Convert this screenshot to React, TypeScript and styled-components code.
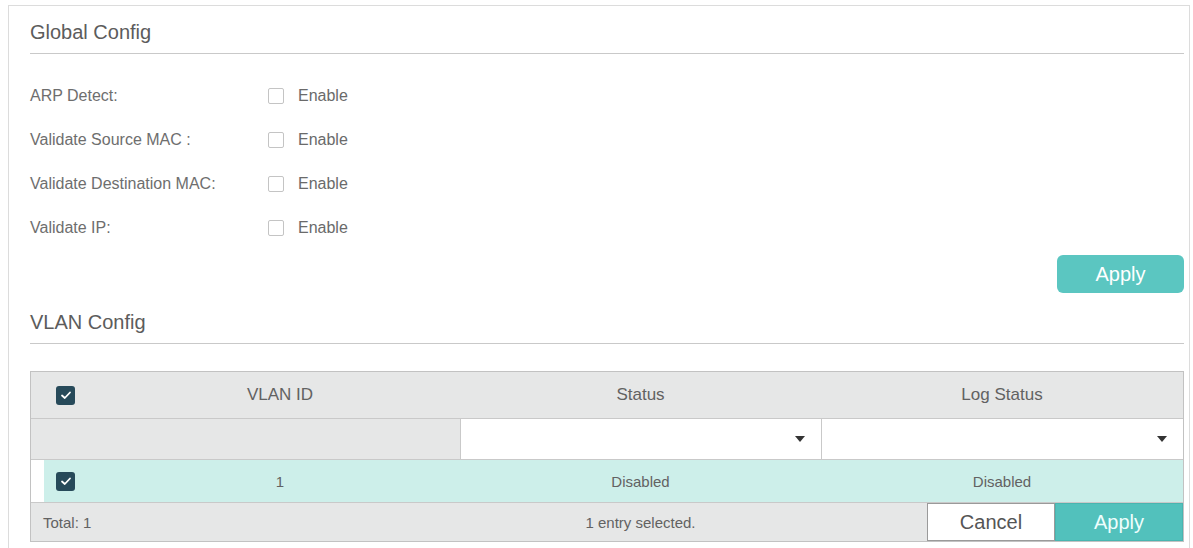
import React from 'react';
import styled, { createGlobalStyle } from 'styled-components';

const GlobalStyle = createGlobalStyle`
  body {
    margin: 0;
    background: #ffffff;
    font-family: "Liberation Sans", Arial, sans-serif;
  }
`;

const teal = '#5bc6c1';

const Panel = styled.div`
  margin: 5px 3px 0 8px;
  border: 1px solid #dcdcdc;
  border-bottom: none;
  padding: 0 5px 0 21px;
  min-height: 560px;
  box-sizing: border-box;
`;

const SectionTitle = styled.div<{ $gap?: number }>`
  margin-top: ${(p) => p.$gap || 0}px;
  padding: 14px 0 9px;
  font-size: 20px;
  line-height: 24px;
  color: #5c5c5c;
  border-bottom: 1px solid #c9c9c9;
`;

const FormList = styled.div`
  margin-top: 20px;
`;

const FormRow = styled.div`
  display: flex;
  align-items: center;
  height: 44px;
`;

const Label = styled.div`
  width: 238px;
  font-size: 16px;
  color: #6e6e6e;
`;

const CheckLabel = styled.label`
  display: flex;
  align-items: center;
  gap: 14px;
  font-size: 16px;
  color: #6a6a6a;
`;

const EmptyBox = styled.span`
  width: 14px;
  height: 14px;
  border: 1px solid #c4c4c4;
  border-radius: 2px;
  background: #ffffff;
`;

const ActionBar = styled.div`
  display: flex;
  justify-content: flex-end;
  margin-top: 5px;
`;

const ApplyButton = styled.button`
  width: 127px;
  height: 38px;
  border: none;
  border-radius: 6px;
  background: ${teal};
  color: #ffffff;
  font-family: inherit;
  font-size: 20px;
  padding: 0;
`;

const Table = styled.div`
  margin-top: 27px;
  border: 1px solid #c2c2c2;
`;

const GridRow = styled.div<{ $h: number; $bg: string; $line?: boolean }>`
  display: grid;
  grid-template-columns: 69px 360px 361px 1fr;
  height: ${(p) => p.$h}px;
  background: ${(p) => p.$bg};
  border-bottom: ${(p) => (p.$line ? '1px solid #c9c9c9' : 'none')};
`;

const Cell = styled.div<{ $size?: number; $span?: number; $align?: string; $pad?: number }>`
  display: flex;
  align-items: center;
  justify-content: ${(p) => p.$align || 'center'};
  grid-column: span ${(p) => p.$span || 1};
  padding-left: ${(p) => p.$pad || 0}px;
  font-size: ${(p) => p.$size || 15}px;
  color: #626262;
`;

const SelectBox = styled.div`
  display: flex;
  align-items: center;
  justify-content: flex-end;
  padding-right: 16px;
  background: #ffffff;
  border-left: 1px solid #c9c9c9;
`;

const Caret = styled.span`
  width: 0;
  height: 0;
  border-left: 5px solid transparent;
  border-right: 5px solid transparent;
  border-top: 6px solid #333333;
`;

const CheckedBox = styled.span`
  display: flex;
  align-items: center;
  justify-content: center;
  width: 19px;
  height: 19px;
  border-radius: 3px;
  background: #274a5a;
`;

const FooterButtons = styled.div`
  display: flex;
  justify-content: flex-end;
`;

const FooterButton = styled.button<{ $primary?: boolean }>`
  width: 128px;
  height: 100%;
  padding: 0;
  font-family: inherit;
  font-size: 20px;
  border: 1px solid ${(p) => (p.$primary ? '#49b5b0' : '#9a9a9a')};
  background: ${(p) => (p.$primary ? '#52c1bc' : '#ffffff')};
  color: ${(p) => (p.$primary ? '#eefefd' : '#555555')};
`;

const Check = () => (
  <CheckedBox>
    <svg width="12" height="10" viewBox="0 0 12 10">
      <polyline points="2,5.5 4.8,8 10,2.5" fill="none" stroke="#ffffff" strokeWidth="1.8" strokeLinecap="round" strokeLinejoin="round" />
    </svg>
  </CheckedBox>
);

const options = ['ARP Detect:', 'Validate Source MAC :', 'Validate Destination MAC:', 'Validate IP:'];

export default function App() {
  return (
    <>
      <GlobalStyle />
      <Panel>
        <SectionTitle>Global Config</SectionTitle>
        <FormList>
          {options.map((o) => (
            <FormRow key={o}>
              <Label>{o}</Label>
              <CheckLabel>
                <EmptyBox />
                Enable
              </CheckLabel>
            </FormRow>
          ))}
        </FormList>
        <ActionBar>
          <ApplyButton>Apply</ApplyButton>
        </ActionBar>
        <SectionTitle $gap={3}>VLAN Config</SectionTitle>
        <Table>
          <GridRow $h={46} $bg="#e6e7e7" $line>
            <Cell>
              <Check />
            </Cell>
            <Cell $size={17}>VLAN ID</Cell>
            <Cell $size={17}>Status</Cell>
            <Cell $size={17}>Log Status</Cell>
          </GridRow>
          <GridRow $h={40} $bg="#e6e7e7" $line>
            <Cell $span={2} />
            <SelectBox>
              <Caret />
            </SelectBox>
            <SelectBox>
              <Caret />
            </SelectBox>
          </GridRow>
          <GridRow $h={42} $bg="linear-gradient(to right, #ffffff 13px, #cdefea 13px)" $line>
            <Cell>
              <Check />
            </Cell>
            <Cell>1</Cell>
            <Cell>Disabled</Cell>
            <Cell>Disabled</Cell>
          </GridRow>
          <GridRow $h={38} $bg="#e6e7e7">
            <Cell $span={2} $align="flex-start" $pad={12}>
              Total: 1
            </Cell>
            <Cell>1 entry selected.</Cell>
            <FooterButtons>
              <FooterButton>Cancel</FooterButton>
              <FooterButton $primary>Apply</FooterButton>
            </FooterButtons>
          </GridRow>
        </Table>
      </Panel>
    </>
  );
}
